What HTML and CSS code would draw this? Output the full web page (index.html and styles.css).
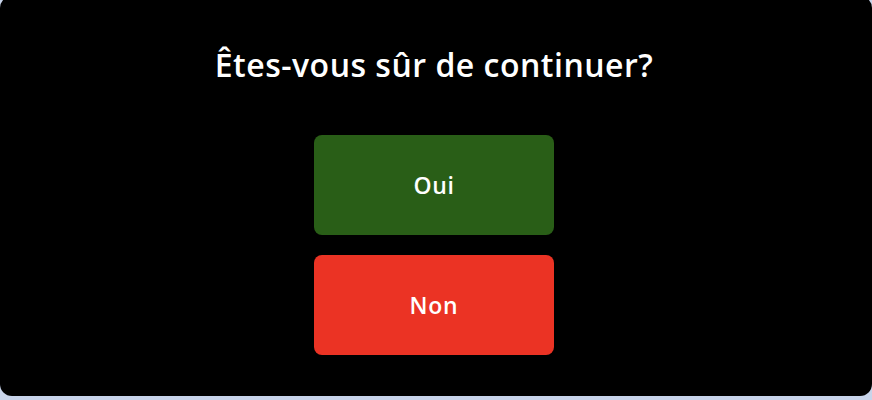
FILE: index.html
```html
<!DOCTYPE html>
<html lang="fr">
<head>
<meta charset="utf-8">
<title>Confirmation</title>
<link rel="stylesheet" href="styles.css">
</head>
<body>
<div class="dialog">
  <h1 class="title">Êtes-vous sûr de continuer?</h1>
  <div class="actions">
    <button class="btn btn-yes" type="button">Oui</button>
    <button class="btn btn-no" type="button">Non</button>
  </div>
</div>
</body>
</html>
```
FILE: styles.css
```css
html, body {
  margin: 0;
  padding: 0;
  background: #c8d4ea;
  height: 400px;
  overflow: hidden;
}
.dialog {
  box-sizing: border-box;
  margin-top: -4px;
  height: 400px;
  width: 872px;
  background: #000;
  border-radius: 12px;
  display: flex;
  flex-direction: column;
  align-items: center;
  padding-top: 49px;
  padding-right: 4px;
  font-family: "Open Sans", "Noto Sans", sans-serif;
  color: #fff;
}
.title {
  margin: 0;
  font-size: 32px;
  line-height: 40px;
  font-weight: 600;
  letter-spacing: 0.5px;
}
.actions {
  margin-top: 50px;
  display: flex;
  flex-direction: column;
  gap: 20px;
}
.btn {
  width: 240px;
  height: 100px;
  border: 0;
  border-radius: 8px;
  color: #fff;
  font-family: "Open Sans", "Noto Sans", sans-serif;
  font-size: 23px;
  font-weight: 600;
  letter-spacing: 0.7px;
  display: flex;
  align-items: center;
  justify-content: center;
  padding: 0;
}
.btn-yes { background: #295e17; }
.btn-no { background: #eb3324; }
```
